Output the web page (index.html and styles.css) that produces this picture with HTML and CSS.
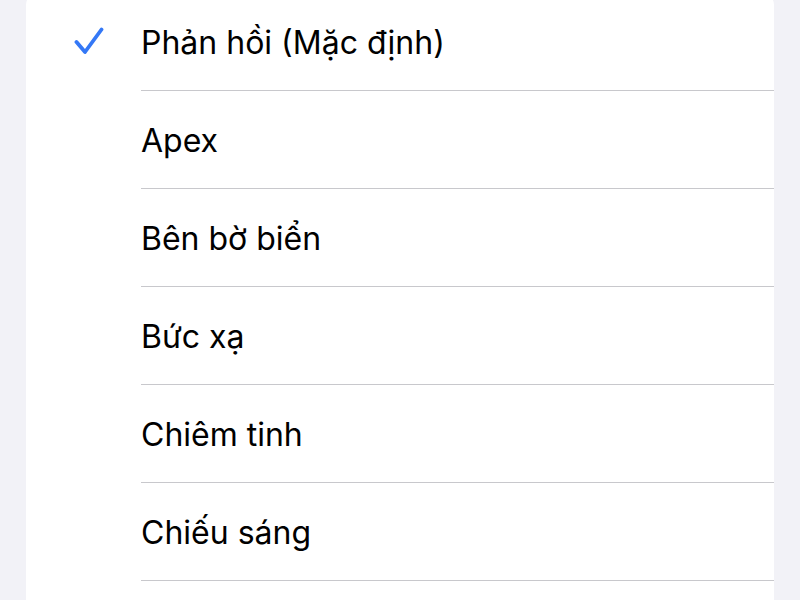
FILE: index.html
```html
<!DOCTYPE html>
<html lang="vi">
<head>
    <meta charset="UTF-8">
    <meta name="viewport" content="width=device-width, initial-scale=1.0">
    <title>Nhạc chuông</title>
    <link rel="stylesheet" href="styles.css">
</head>
<body>
    <div class="list">
        <div class="row selected">
            <span class="check">
                <svg width="32" height="32" viewBox="0 0 32 32">
                    <path d="M4.5 16 L13 26 L29.5 3.5" fill="none" stroke="#3478f6" stroke-width="3.8" stroke-linecap="round" stroke-linejoin="round"/>
                </svg>
            </span>
            <span class="label">Phản hồi (Mặc định)</span>
        </div>
        <div class="row"><span class="check"></span><span class="label">Apex</span></div>
        <div class="row"><span class="check"></span><span class="label">Bên bờ biển</span></div>
        <div class="row"><span class="check"></span><span class="label">Bức xạ</span></div>
        <div class="row"><span class="check"></span><span class="label">Chiêm tinh</span></div>
        <div class="row"><span class="check"></span><span class="label">Chiếu sáng</span></div>
        <div class="row"><span class="check"></span><span class="label"></span></div>
    </div>
</body>
</html>
```

FILE: styles.css
```css
body {
    margin: 0;
    padding: 0 26px;
    background-color: #f2f2f7;
    font-family: Inter, "Liberation Sans", sans-serif;
    overflow: hidden;
}
.list {
    margin-top: -7px;
    background-color: white;
    border-radius: 12px;
}
.row {
    display: flex;
    align-items: center;
    height: 98px;
}
.check {
    width: 115px;
    flex: none;
    display: flex;
    justify-content: center;
    padding-left: 8px;
    box-sizing: border-box;
}
.label {
    flex: 1;
    height: 98px;
    display: flex;
    align-items: center;
    padding-top: 2px;
    box-sizing: border-box;
    border-bottom: 1px solid #c8c8cc;
    font-size: 32px;
    color: #000;
}
```
